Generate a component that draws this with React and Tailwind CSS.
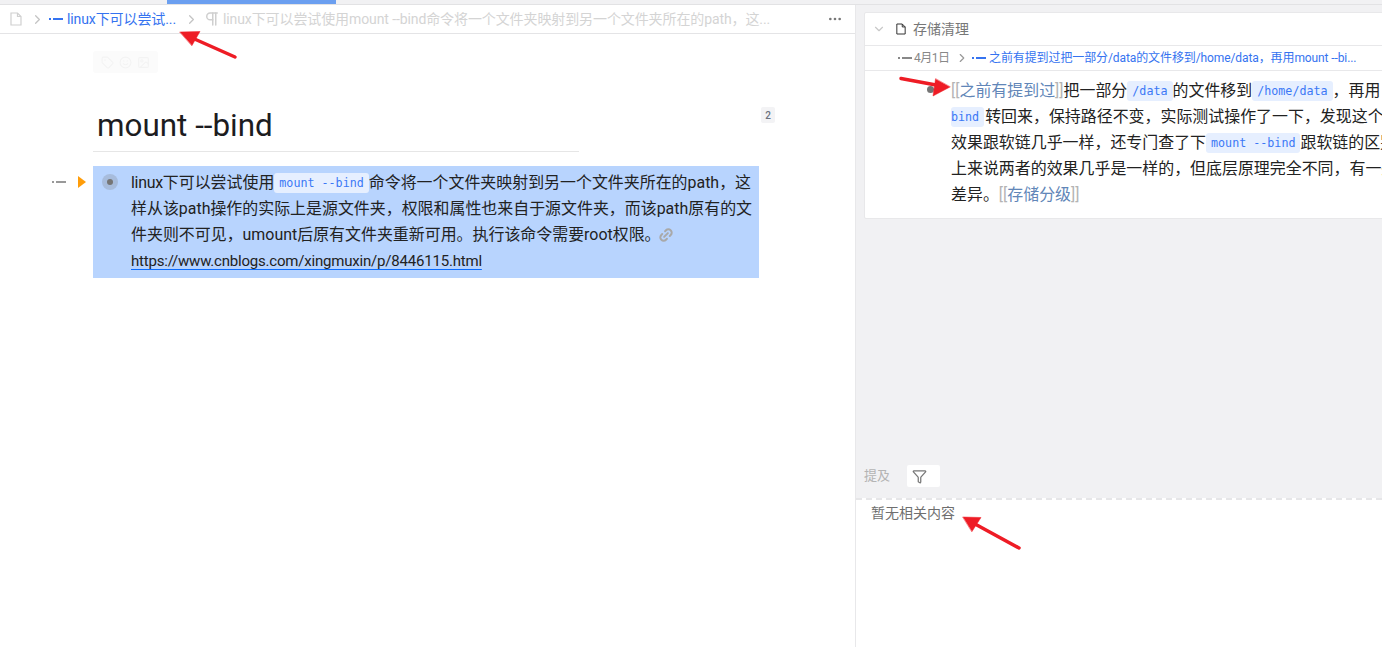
import { ChevronRight, ChevronDown, MoreHorizontal, Link2, Pilcrow, Filter, Tag, Smile, Image } from 'lucide-react';

const SANS = "font-['Roboto','Noto_Sans_CJK_SC',sans-serif]";

function FileIcon({ className }) {
  return (
    <svg viewBox="0 0 12 14" className={className} fill="none" stroke="currentColor" strokeWidth="1.2">
      <path d="M1 1h6.5L11 4.5V13H1z" />
      <path d="M7.5 1v3.5H11" />
    </svg>
  );
}

function BlockDash({ className }) {
  return (
    <span className={`flex w-[14px] shrink-0 items-center gap-[2px] ${className}`}>
      <span className="h-[2px] w-[2px] bg-current" />
      <span className="h-[2px] w-[10px] bg-current" />
    </span>
  );
}

function Code({ children }) {
  return (
    <code className="inline-block h-[20px] rounded-[3px] bg-[#e6efff] px-[5px] align-[1px] font-['DejaVu_Sans_Mono',monospace] text-[11.7px] leading-[20px] text-[#3b78f6]">
      {children}
    </code>
  );
}

function Ref({ children }) {
  return (
    <span className="text-[#b4b4b4]">
      [[<span className="text-[#6186b8]">{children}</span>]]
    </span>
  );
}

function Arrows() {
  return (
    <svg className="pointer-events-none absolute left-0 top-0 h-[647px] w-[1382px]" viewBox="0 0 1382 647">
      <g stroke="#ee1c25" strokeWidth="3.5" strokeLinecap="round" fill="#ee1c25">
        <path d="M235 57L190 37" fill="none" />
        <path d="M180 32l20-.5-8 14z" strokeWidth="0.5" />
        <path d="M901 78.5L936 85" fill="none" />
        <path d="M950 87l-17 9 2.500-17z" strokeWidth="0.5" />
        <path d="M1019 548L975 524" fill="none" />
        <path d="M963 517l18 .5-9 14z" strokeWidth="0.5" />
      </g>
    </svg>
  );
}

function Editor() {
  return (
    <div className="flex w-[855px] shrink-0 flex-col bg-white">
      <div className="flex h-[29px] shrink-0 items-center whitespace-nowrap border-b border-[#e4e4e6] pl-[10px] pr-[12px] text-[14px]">
        <FileIcon className="h-[14px] w-[12px] shrink-0 text-[#d0d0d0]" />
        <ChevronRight className="ml-[8px] h-[15px] w-[15px] shrink-0 text-[#c4c4c4]" />
        <BlockDash className="ml-[4px] text-[#3573f0]" />
        <span className="ml-[4px] w-[108px] shrink-0 tracking-[-0.1px] text-[#3573f0]">linux下可以尝试...</span>
        <ChevronRight className="ml-[9px] h-[15px] w-[15px] shrink-0 text-[#c4c4c4]" />
        <Pilcrow className="ml-[4px] h-[18px] w-[18px] shrink-0 text-[#cfcfcf]" />
        <span className="ml-[2px] w-[548px] tracking-[-0.1px] text-[#d4d4d4]">
          linux下可以尝试使用mount --bind命令将一个文件夹映射到另一个文件夹所在的path，这...
        </span>
        <MoreHorizontal className="ml-auto h-[16px] w-[16px] shrink-0 text-[#777]" />
      </div>

      <div className="pl-[93px]">
        <div className="mt-[17px] flex h-[22px] w-[65px] items-center justify-center gap-[5px] rounded-[3px] bg-[#fbfbfb] text-[#f3f3f3]">
          <Tag className="h-[13px] w-[13px]" />
          <Smile className="h-[13px] w-[13px]" />
          <Image className="h-[13px] w-[13px]" />
        </div>

        <div className="relative mt-[32px] h-[47px] w-[486px] border-b border-[#e6e6e6] pl-[4px]">
          <h1 className="text-[31.4px] font-normal leading-[42px] text-[#1c1c1f]">mount --bind</h1>
          <span className="absolute left-[668px] top-[2px] flex h-[16px] w-[14px] items-center justify-center rounded-[2px] bg-[#f3f3f5] text-[10px] font-medium text-[#6b7280]">
            2
          </span>
        </div>

        <div className="relative mt-[14px] w-[666px] bg-[#b8d4fe] pb-[4px] pl-[38px] pr-[8px] pt-[4px] text-[15.95px] leading-[26px] text-[#222]">
          <BlockDash className="absolute left-[-41px] top-[15px] text-[#999]" />
          <span className="absolute left-[-15px] top-[10px] h-0 w-0 border-y-[6px] border-l-[8px] border-y-transparent border-l-[#ff9d0a]" />
          <span className="absolute left-[9px] top-[8px] flex h-[16px] w-[16px] items-center justify-center rounded-full bg-[#a7bcdc]">
            <span className="h-[6px] w-[6px] rounded-full bg-[#757575]" />
          </span>
          <p className="whitespace-nowrap">
            <span className="tracking-[-0.3px]">linux</span>下可以尝试使用<Code>mount --bind</Code>命令将一个文件夹映射到另一个文件夹所在的path，这
          </p>
          <p className="whitespace-nowrap">样从该path操作的实际上是源文件夹，权限和属性也来自于源文件夹，而该path原有的文</p>
          <p className="flex items-center whitespace-nowrap">
            件夹则不可见，umount后原有文件夹重新可用。执行该命令需要root权限。
            <Link2 strokeWidth={3} className="-ml-[3px] h-[16px] w-[16px] -rotate-45 text-[#a9a9a9]" />
          </p>
          <a className="text-[15px] tracking-[-0.2px] underline decoration-[#0a6cff] underline-offset-[3px]">https://www.cnblogs.com/xingmuxin/p/8446115.html</a>
        </div>
      </div>
    </div>
  );
}

function Backlinks() {
  return (
    <div className="flex min-w-0 flex-1 flex-col overflow-hidden border-l border-[#e8e8ea]">
      <div className="flex h-[493px] shrink-0 flex-col bg-[#f1f1f3] pl-[8px] pt-[7px]">
        <div className="w-[560px] rounded-[2px] border border-[#e8e8ea] bg-white">
          <div className="flex h-[33px] items-center border-b border-[#e8e8ea] pl-[7px] text-[14px] text-[#777]">
            <ChevronDown className="h-[14px] w-[14px] text-[#c8c8c8]" />
            <FileIcon className="ml-[10px] h-[12px] w-[10px] text-[#333]" />
            <span className="ml-[7px]">存储清理</span>
          </div>
          <div className="flex h-[25px] items-center whitespace-nowrap border-b border-[#e8e8ea] pl-[33px] text-[12px]">
            <BlockDash className="text-[#888]" />
            <span className="ml-[2px] w-[33px] tracking-[-0.5px] text-[#888]">4月1日</span>
            <ChevronRight className="ml-[8px] h-[14px] w-[14px] shrink-0 text-[#999]" />
            <BlockDash className="ml-[3px] text-[#3573f0]" />
            <span className="ml-[3px] tracking-[-0.1px] text-[#3573f0]">
              之前有提到过把一部分/data的文件移到/home/data，再用mount --bi...
            </span>
          </div>
          <div className="relative pb-[10px] pl-[86px] pt-[7px] text-[15.95px] leading-[26px] text-[#222]">
            <span className="absolute left-[62px] top-[15px] h-[7px] w-[7px] rounded-full bg-[#757575]" />
            <p className="whitespace-nowrap">
              <Ref>之前有提到过</Ref>把一部分<Code>/data</Code>的文件移到<Code>/home/data</Code>，再用 mount --
            </p>
            <p className="whitespace-nowrap">
              <code className="inline-block h-[20px] rounded-[3px] bg-[#e6efff] pr-[5px] align-[1px] font-['DejaVu_Sans_Mono',monospace] text-[11.7px] leading-[20px] text-[#3b78f6]">bind</code>
              <span className="ml-[1px]">转回来，保持路径不变，实际测试操作了一下，发现这个</span>
            </p>
            <p className="whitespace-nowrap">
              效果跟软链几乎一样，还专门查了下<Code>mount --bind</Code>跟软链的区别
            </p>
            <p className="whitespace-nowrap">上来说两者的效果几乎是一样的，但底层原理完全不同，有一些</p>
            <p className="whitespace-nowrap">
              差异。<Ref>存储分级</Ref>
            </p>
          </div>
        </div>

        <div className="mb-[11px] mt-auto flex h-[22px] items-center gap-[17px] text-[13px] text-[#b4b4b4]">
          <span>提及</span>
          <span className="flex h-[22px] w-[33px] items-center rounded-[2px] bg-white pl-[5px]">
            <Filter className="h-[15px] w-[15px] text-[#777]" />
          </span>
        </div>
      </div>

      <div className="flex-1 border-t-2 border-dashed border-[#e6e6e8] bg-white px-[15px] pt-[3px] text-[14px] leading-[20px] text-[#6f6f6f]">
        暂无相关内容
      </div>
    </div>
  );
}

export default function App() {
  return (
    <div className={`relative flex h-[647px] w-[1382px] flex-col overflow-hidden bg-white ${SANS}`}>
      <div className="h-[5px] shrink-0 border-b border-[#e2e2e4] bg-[#f1f1f3]">
        <div className="ml-[167px] h-[4px] w-[169px] bg-[#6b9ff0]" />
      </div>
      <div className="flex min-h-0 flex-1">
        <Editor />
        <Backlinks />
      </div>
      <Arrows />
    </div>
  );
}
